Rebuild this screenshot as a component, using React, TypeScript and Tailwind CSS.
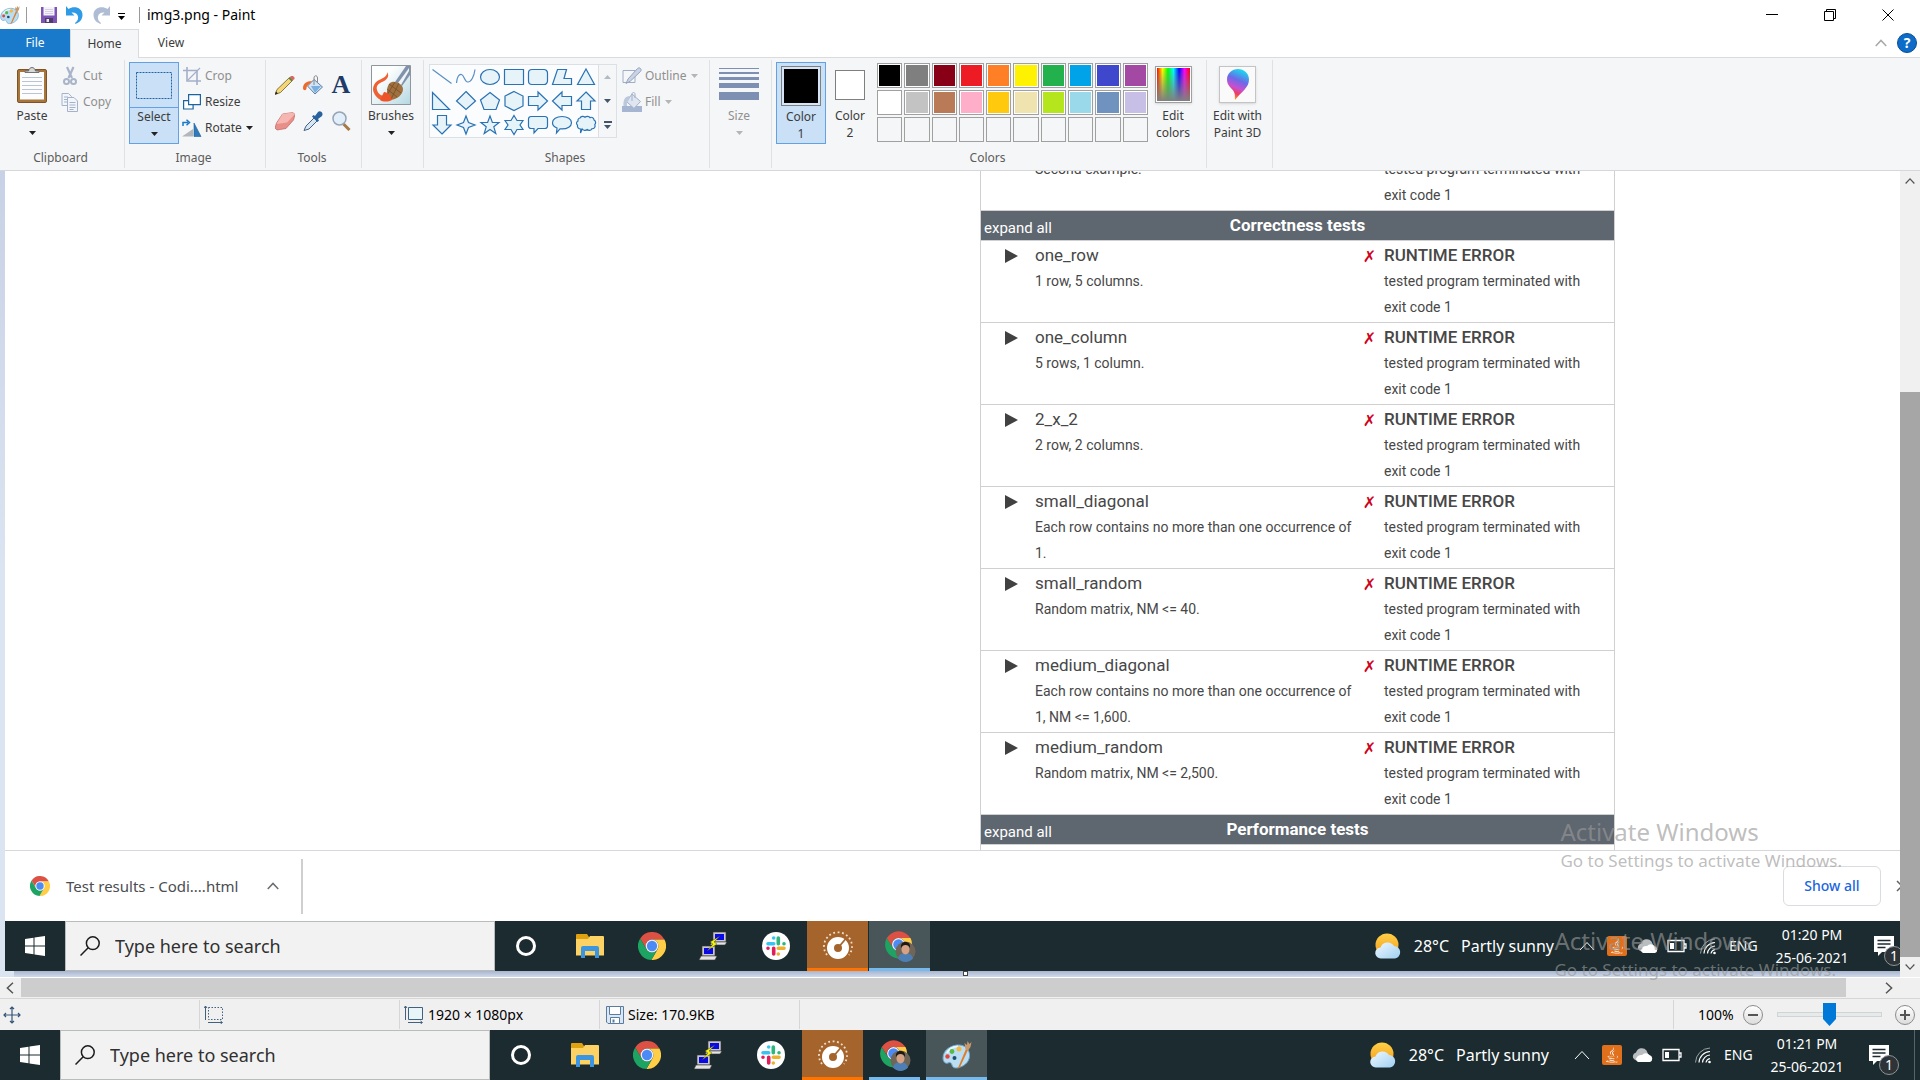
import type { ReactNode } from "react";
import { FaJava } from "react-icons/fa";

/* ---------- data ---------- */

type TestCase = { name: string; info: string };

const tests: TestCase[] = [
  { name: "one_row", info: "1 row, 5 columns." },
  { name: "one_column", info: "5 rows, 1 column." },
  { name: "2_x_2", info: "2 row, 2 columns." },
  { name: "small_diagonal", info: "Each row contains no more than one occurrence of 1." },
  { name: "small_random", info: "Random matrix, NM <= 40." },
  { name: "medium_diagonal", info: "Each row contains no more than one occurrence of 1, NM <= 1,600." },
  { name: "medium_random", info: "Random matrix, NM <= 2,500." },
];

const palette = [
  "#000000", "#7f7f7f", "#880015", "#ed1c24", "#ff7f27", "#fff200", "#22b14c", "#00a2e8", "#3f48cc", "#a349a4",
  "#ffffff", "#c3c3c3", "#b97a57", "#ffaec9", "#ffc90e", "#efe4b0", "#b5e61d", "#99d9ea", "#7092be", "#c8bfe7",
  "", "", "", "", "", "", "", "", "", "",
];

const shapes: { label: string; d: string; open?: boolean }[] = [
  { label: "Line", d: "M2.5 4.5 21.500 18.500", open: true },
  { label: "Curve", d: "M2.500 18C3 12 5 9 7.500 9.500c3 1 3 8 6.500 7.500 3 0 6-5 7-12.500", open: true },
  { label: "Oval", d: "M2.500 12a9.500 7.500 0 1 0 19 0a9.500 7.500 0 1 0-19 0Z" },
  { label: "Rectangle", d: "M2.500 4.500h19v15h-19Z" },
  { label: "Rounded rectangle", d: "M6 4.500h12a3.500 3.500 0 0 1 3.500 3.500v8a3.500 3.500 0 0 1-3.500 3.500H6A3.500 3.500 0 0 1 2.500 16V8A3.500 3.500 0 0 1 6 4.500Z" },
  { label: "Polygon", d: "M7.500 4.500h9L14 13.500h7.500v6h-19Z" },
  { label: "Triangle", d: "M12 4 20.500 19.500h-17Z" },
  { label: "Right triangle", d: "M2.500 3.500v17h17Z" },
  { label: "Diamond", d: "M12 2.500 21.500 12 12 20.500 2.500 12Z" },
  { label: "Pentagon", d: "M12 3.500 21.500 11 18 20.500H6L2.500 11Z" },
  { label: "Hexagon", d: "M12 2.500 21 7v10l-9 4.500L3 17V7Z" },
  { label: "Right arrow", d: "M2.500 7.500h9.500V3l9.500 9-9.500 9v-4.500H2.500Z" },
  { label: "Left arrow", d: "M21.500 7.500H12V3l-9.500 9 9.500 9v-4.500h9.500Z" },
  { label: "Up arrow", d: "M12 3l9 9h-4.500v8.500h-9V12H3Z" },
  { label: "Down arrow", d: "M12 21l9-9h-4.500V2.500h-9V12H3Z" },
  { label: "Four-point star", d: "M12 3l2.500 6.500 6.500 2.500-6.500 2.500L12 21l-2.500-6.500L3 12l6.500-2.500Z" },
  { label: "Five-point star", d: "M12 3l2.400 6.500h6.600l-5.200 4.300 2 6.700L12 16.500l-5.800 4 2-6.700L3 9.500h6.600Z" },
  { label: "Six-point star", d: "M12 2.500l3 5h6L18 12l3 4.500h-6l-3 5-3-5H3L6 12 3 7.500h6Z" },
  { label: "Rounded callout", d: "M5 3.500h14a2.500 2.500 0 0 1 2.500 2.500v7a2.500 2.500 0 0 1-2.500 2.500h-7L8 20v-4.500H5A2.500 2.500 0 0 1 2.500 13V6A2.500 2.500 0 0 1 5 3.500Z" },
  { label: "Oval callout", d: "M12 3.500c5.500 0 9.500 2.600 9.500 6.200s-4 6.200-9.500 6.200h-2L6.500 20l.5-5C4.300 14 2.500 12 2.500 9.700 2.500 6.100 6.500 3.500 12 3.500Z" },
  { label: "Cloud callout", d: "M6 5c1-2 3.500-2 5-.8C12.500 3 15 3 16 4.600c2-1 4 .4 4 2.400 2 1 2 3.500.8 4.700 1 1.800-.5 4.300-2.800 4-1 2-3.500 2-4.800.8-1.500 1.500-4 1-5-.5L6.500 20l.3-4C4.500 16 3 14 3.500 12.300 2 11 2.300 8.600 4 8 3.600 6.400 4.600 5.200 6 5Z" },
];

/* ---------- icons ---------- */

function Caret({ className = "text-[#222]" }: { className?: string }) {
  return (
    <svg viewBox="0 0 7 4" className={`h-1 w-[7px] ${className}`} aria-hidden="true">
      <path d="M0 0h7L3.500 4Z" fill="currentColor" />
    </svg>
  );
}

function Chevron({ className }: { className: string }) {
  return (
    <svg viewBox="0 0 16 10" className={className} fill="none" stroke="currentColor" aria-hidden="true">
      <path d="M1 9l7-7.500L15 9" />
    </svg>
  );
}

function PaintIcon({ className }: { className: string }) {
  return (
    <svg viewBox="0 0 30 30" className={className} aria-hidden="true">
      <path d="M15 5C7 6 1 11 1 18c0 4 2.500 6 5 5 2-1 3.500 0 4 2 .6 3 3.500 3.500 7 2.500 7-2 11-7 10.500-13C27 8 22 4.500 15 5Z" fill="#b9def3" stroke="#6ea5cb" />
      <path d="M5 13c2-4 6-6.500 11-6.500" stroke="#e8f6fd" strokeWidth="2" fill="none" />
      <circle cx="5.500" cy="16.500" r="2.200" fill="#e2453c" />
      <circle cx="10" cy="11.500" r="2.400" fill="#58b947" />
      <circle cx="17" cy="9" r="2.500" fill="#f6b73c" />
      <circle cx="12.500" cy="18" r="2" fill="#1f4d6b" />
      <path d="M15.500 29 24 9l2 1-8 17Z" fill="#e07b28" />
      <path d="M23.500 9.500 22.500 3 25 5l.5-4 2 3 2-2-1 5-2.500 3.500Z" fill="#c89a6c" />
    </svg>
  );
}

function ChromeIcon({ className }: { className: string }) {
  return (
    <svg viewBox="0 0 24 24" className={className} aria-hidden="true">
      <path d="M1.900 5.510A12 12 0 0 1 22.670 6.500L12 6.500A5.500 5.500 0 0 0 7.240 14.750Z" fill="#dd5144" />
      <path d="M22.670 6.500A12 12 0 0 1 11.430 23.990L16.760 14.750A5.500 5.500 0 0 0 12 6.500Z" fill="#ffcd46" />
      <path d="M11.430 23.990A12 12 0 0 1 1.900 5.510L7.240 14.750A5.500 5.500 0 0 0 16.760 14.750Z" fill="#1da462" />
      <circle cx="12" cy="12" r="5.500" fill="#f1f1f1" />
      <circle cx="12" cy="12" r="4.400" fill="#4c8bf5" />
    </svg>
  );
}

function ChromeProfileIcon() {
  return (
    <svg viewBox="0 0 32 32" className="h-8 w-8" aria-hidden="true">
      <path d="M2.700 8A14 14 0 0 1 26.500 8L14.500 8A6.500 6.500 0 0 0 8.800 18Z" fill="#dd5144" />
      <path d="M26.500 8A14 14 0 0 1 14 28.500L20 18A6.500 6.500 0 0 0 14.500 8Z" fill="#ffcd46" />
      <path d="M14 28.500A14 14 0 0 1 2.700 8L8.800 18A6.500 6.500 0 0 0 20 18Z" fill="#1da462" />
      <circle cx="14.500" cy="14.500" r="6.500" fill="#f1f1f1" />
      <circle cx="14.500" cy="14.500" r="5.200" fill="#4c8bf5" />
      <circle cx="21.500" cy="21.500" r="10" fill="#6f6659" />
      <path d="M14 28.500c1-4 4-5.500 7.500-5.500s6.500 1.500 7.500 5.500a10 10 0 0 1-15 0Z" fill="#4d7fb4" />
      <ellipse cx="21.500" cy="19.500" rx="4" ry="5" fill="#d6a283" />
      <path d="M17 18c-.5-4 1.500-6 4.500-6s5 2 4.500 6c-1-2-2-3-4.500-3s-3.500 1-4.500 3Z" fill="#1d1917" />
    </svg>
  );
}

function FolderIcon() {
  return (
    <svg viewBox="0 0 28 24" className="h-6 w-7" aria-hidden="true">
      <path d="M0 1a1 1 0 0 1 1-1h10l2 3v4H0Z" fill="#e0a10e" />
      <path d="M0 5h12l2-3h13a1 1 0 0 1 1 1v18.500H0Z" fill="#fdd264" />
      <path d="M5 24V14a2 2 0 0 1 2-2h14a2 2 0 0 1 2 2v10h-4v-7H9v7Z" fill="#3b95e0" />
    </svg>
  );
}

function PuttyIcon() {
  return (
    <svg viewBox="0 0 30 30" className="h-[30px] w-[30px]" aria-hidden="true">
      <path d="M14 1h13v10H14Z" fill="#c8c8c8" stroke="#333" strokeWidth=".6" />
      <path d="M16 3h9v6h-9Z" fill="#0808e8" />
      <path d="M13 11h15l-2 3H11Z" fill="#e4e4e4" stroke="#333" strokeWidth=".6" />
      <path d="M3 15h13v10H3Z" fill="#c8c8c8" stroke="#333" strokeWidth=".6" />
      <path d="M5 17h9v6H5Z" fill="#0808e8" />
      <path d="M2 25h16l-2 4H0Z" fill="#e4e4e4" stroke="#333" strokeWidth=".6" />
      <path d="M21 5l-10 6 3 2-6 7 10-7-3-2Z" fill="#f6f600" stroke="#333" strokeWidth=".4" />
    </svg>
  );
}

function SlackIcon() {
  return (
    <svg viewBox="0 0 28 28" className="h-7 w-7" aria-hidden="true">
      <circle cx="14" cy="14" r="14" fill="#fff" />
      <g strokeWidth="3.600" strokeLinecap="round">
        <path d="M11.700 6v0M6 11.700h5.700" stroke="#36c5f0" />
        <path d="M16.300 6v5.700M22 11.700v0" stroke="#2eb67d" />
        <path d="M16.300 22v0M16.300 16.300H22" stroke="#ecb22e" />
        <path d="M11.700 22v-5.700M6 16.300v0" stroke="#e01e5a" />
      </g>
    </svg>
  );
}

function GaugeIcon() {
  return (
    <svg viewBox="0 0 30 30" className="h-[30px] w-[30px]" fill="none" aria-hidden="true">
      <path d="M4 24A14 14 0 1 1 26 24" stroke="#f3dfcd" strokeWidth="1.800" strokeDasharray="1.800 2.600" />
      <circle cx="15" cy="17" r="7.500" stroke="#fff" strokeWidth="7" />
      <path d="M14.500 17.500l8-9.500" stroke="#a4642c" strokeWidth="1.800" />
    </svg>
  );
}

function WindowsLogo() {
  return (
    <svg viewBox="0 0 20 20" className="h-5 w-5" fill="#fff" aria-hidden="true">
      <path d="M0 3l8.500-1.200V9.500H0ZM9.500 1.600 20 0v9.500H9.500ZM0 10.500h8.500v7.700L0 17ZM9.500 10.500H20V20L9.500 18.400Z" />
    </svg>
  );
}

function SearchIcon() {
  return (
    <svg viewBox="0 0 20 20" className="h-5 w-5 shrink-0" fill="none" stroke="#1c1c1c" strokeWidth="1.500" aria-hidden="true">
      <circle cx="12.800" cy="7.200" r="6.400" />
      <path d="M8.200 11.800.5 19.500" />
    </svg>
  );
}

function WeatherIcon() {
  return (
    <svg viewBox="0 0 26 26" className="h-[26px] w-[26px]" aria-hidden="true">
      <defs>
        <linearGradient id="sun" x1="0" y1="0" x2="0" y2="1">
          <stop offset="0" stopColor="#ffd046" />
          <stop offset="1" stopColor="#f59a1b" />
        </linearGradient>
        <linearGradient id="cloud" x1="0" y1="0" x2="1" y2="1">
          <stop offset="0" stopColor="#f0f9ff" />
          <stop offset="1" stopColor="#9fcff2" />
        </linearGradient>
      </defs>
      <circle cx="12" cy="12" r="11.500" fill="url(#sun)" />
      <path d="M6 25.500a5.500 5.500 0 0 1-.5-11A7.500 7.500 0 0 1 19 13a6.300 6.300 0 0 1 1 12.500Z" fill="url(#cloud)" />
    </svg>
  );
}

function CloudIcon() {
  return (
    <svg viewBox="0 0 22 16" className="h-4 w-[22px]" aria-hidden="true">
      <path d="M3 13a4 4 0 0 1 1-7.500 6 6 0 0 1 10.500-2L17 9 8 14Z" fill="#b9bdbf" />
      <path d="M6 15a3 3 0 0 1-1-5 5 5 0 0 1 5-2 5 5 0 0 1 7.500 0A3.700 3.700 0 0 1 18 15Z" fill="#fff" />
    </svg>
  );
}

function BatteryIcon() {
  return (
    <svg viewBox="0 0 20 14" className="h-3.5 w-5" aria-hidden="true">
      <path d="M1 1.500h16v11H1ZM17 5h2v4h-2" fill="none" stroke="#fff" strokeWidth="1.300" />
      <path d="M3 4h4v6H3Z" fill="#fff" />
    </svg>
  );
}

function WifiIcon() {
  return (
    <svg viewBox="0 0 18 18" className="h-[18px] w-[18px]" fill="none" stroke="#fff" aria-hidden="true">
      <path d="M1.500 16.500A15 15 0 0 1 16 2" stroke="#9aa4a6" />
      <path d="M5 16.500A11.500 11.500 0 0 1 16 5.500M8.500 16.500A8 8 0 0 1 16 9M12 16.500a5 5 0 0 1 4-4" strokeWidth="1.200" />
      <circle cx="15.500" cy="16" r="1.300" fill="#fff" stroke="none" />
    </svg>
  );
}

function NotificationIcon() {
  return (
    <span className="relative block h-5 w-5">
      <svg viewBox="0 0 20 20" className="h-5 w-5" aria-hidden="true">
        <path d="M0 0h20v16H8l-4 4v-4H0Z" fill="#fff" />
        <path d="M3.500 4.500h13M3.500 8h13M3.500 11.500h8" stroke="#1b2b2f" strokeWidth="1.300" />
      </svg>
      <span className="absolute top-2.5 left-2.5 flex h-5 w-5 items-center justify-center rounded-full border border-[#8d9496] bg-[#2d3336] text-sm leading-none text-white">
        1
      </span>
    </span>
  );
}

function SaveIcon() {
  return (
    <svg viewBox="0 0 16 16" className="h-4 w-4" aria-hidden="true">
      <path d="M0 0h16v16H0Z" fill="#7d53b5" />
      <path d="M2.500 0h11v8.500h-11Z" fill="#f4f2fa" />
      <path d="M4 2.500h8M4 4.500h8M4 6.500h8" stroke="#c8c0dc" strokeWidth=".7" />
      <path d="M4 11h8v5H4Z" fill="#4c3c68" />
      <path d="M5.500 12h2.500v3H5.500Z" fill="#e9e4f4" />
    </svg>
  );
}

function UndoIcon({ className }: { className: string }) {
  return (
    <svg viewBox="0 0 17 18" className={className} aria-hidden="true">
      <path d="M0 0 2.500 3C8-.5 16.500 1.500 16.500 9c0 4.500-3 7.500-7 9l-.5-1c2.500-2 3.500-4 3-6.500C11.500 7 8 6 5.500 6.500L8.500 9.500H0Z" fill="currentColor" />
    </svg>
  );
}

function PasteIcon() {
  return (
    <svg viewBox="0 0 30 36" className="h-9 w-[30px]" aria-hidden="true">
      <rect x=".5" y="2.500" width="29" height="33" rx="1.500" fill="#a9763a" stroke="#7d5427" />
      <path d="M3 5h24v27.500H3Z" fill="#fdfdfd" />
      <path d="M5 10.500h20M5 14.500h20M5 18.500h20M5 22.500h20M5 26.500h20" stroke="#b9c5d6" />
      <path d="M8 5.500h14V4h-3.500C18 1.500 16.500.5 15 .5S12 1.500 11.500 4H8Z" fill="#d8d8d8" stroke="#666" strokeWidth=".9" />
    </svg>
  );
}

function CutIcon() {
  return (
    <svg viewBox="0 0 18 20" className="h-5 w-[18px]" fill="none" stroke="#a9b4ca" aria-hidden="true">
      <path d="M6 1l5 11M12.500 1l-5 11" strokeWidth="2.200" />
      <circle cx="5.500" cy="15.500" r="2.500" strokeWidth="2" />
      <circle cx="12.500" cy="15.500" r="2.500" strokeWidth="2" />
    </svg>
  );
}

function CopyIcon() {
  return (
    <svg viewBox="0 0 18 20" className="h-5 w-[18px]" fill="#f2f5fa" stroke="#a5b2ca" aria-hidden="true">
      <path d="M1 1.500h6.500l3 3v9H1Z" />
      <path d="M3 5h4M3 7.500h4M3 10h4" />
      <path d="M6.500 5.500H13l3.500 3.500v10.500h-10Z" />
      <path d="M8.500 10.500h6M8.500 13h6M8.500 15.500h6M8.500 17.500h4" />
    </svg>
  );
}

function CropIcon() {
  return (
    <svg viewBox="0 0 18 18" className="h-[18px] w-[18px]" fill="none" stroke="#a2afc9" strokeWidth="1.600" aria-hidden="true">
      <path d="M4 0v14h14M0 3.500h14V18" />
      <path d="M5 13 17 1" strokeWidth="1.100" />
    </svg>
  );
}

function ResizeIcon() {
  return (
    <svg viewBox="0 0 18 18" className="h-[18px] w-[18px]" fill="#fdfeff" stroke="#1c63a0" strokeWidth="1.200" aria-hidden="true">
      <path d="M.6 7.600h9.500v8.400H.6Z" />
      <path d="M5.600 1.600h11.800v10H5.600Z" />
    </svg>
  );
}

function RotateIcon() {
  return (
    <svg viewBox="0 0 20 18" className="h-[18px] w-5 shrink-0" aria-hidden="true">
      <path d="M0 17.500 11 10v7.500Z" fill="#b3b7bb" />
      <path d="M12 17.500V4l7 13.500Z" fill="#2f7ab8" stroke="#1c5f9a" strokeWidth=".6" />
      <path d="M1 7V3.500h5M4.500.8 7.500 3.500l-3 2.700" fill="none" stroke="#1979ca" strokeWidth="1.500" />
    </svg>
  );
}

const toolIcons: { label: string; icon: ReactNode }[] = [
  {
    label: "Pencil",
    icon: (
      <svg viewBox="0 0 20 20" className="h-5 w-5" aria-hidden="true">
        <path d="M0 19.500 2 14.500 14.500 2.500l3 3L5.500 17.500Z" fill="#f5d675" stroke="#6d5a28" strokeWidth=".8" />
        <path d="M14.500 2.500 16 1h2l1.500 1.500v1.500L17.500 5.500Z" fill="#d46b63" />
        <path d="M13.500 3.500l1-1 3 3-1 1Z" fill="#4e8a4e" />
        <path d="M0 19.500l1-3 2 2Z" fill="#222" />
      </svg>
    ),
  },
  {
    label: "Fill with color",
    icon: (
      <svg viewBox="0 0 20 20" className="h-5 w-5" aria-hidden="true">
        <path d="M11 4.500 19.500 12 12 19 4.500 11Z" fill="#cfe4f5" stroke="#5d7fa5" />
        <path d="M8 11h10l-6 7Z" fill="#79aede" />
        <path d="M11 10V3c0-3 3.500-3 3.500 0v5" fill="none" stroke="#888" />
        <path d="M9 6C3 6 0 9 0 13c0 3 3.500 3 3.500 0 0-2 1-3 3-4Z" fill="#ee6a2c" />
      </svg>
    ),
  },
  {
    label: "Text",
    icon: <span className="font-['Liberation_Serif',serif] text-[26px] leading-5 font-bold text-[#1f3c68]" aria-hidden="true">A</span>,
  },
  {
    label: "Eraser",
    icon: (
      <svg viewBox="0 0 20 20" className="h-5 w-5" aria-hidden="true">
        <path d="M7.500 3 18 1.500 20 3.500 18.500 9 11 17.500 2 19 0 17 1.500 12Z" fill="#e98f8a" stroke="#c0625e" strokeWidth=".7" />
        <path d="M7.500 3 18 1.500 19.500 3.500 12 11.500 1.500 13Z" fill="#f6b7b2" />
      </svg>
    ),
  },
  {
    label: "Color picker",
    icon: (
      <svg viewBox="0 0 20 20" className="h-5 w-5" aria-hidden="true">
        <path d="M1 19.500 3 15l8-8 3 3-8 8Z" fill="#d7e6f3" stroke="#47627f" />
        <path d="M9 5.500l1.500-1.500 1.500 1 3-4c2-2 6 1 4 4l-4 3 1 1.500-1.500 1.500Z" fill="#28639f" />
      </svg>
    ),
  },
  {
    label: "Magnifier",
    icon: (
      <svg viewBox="0 0 20 20" className="h-5 w-5" aria-hidden="true">
        <path d="M12.500 13l6 6" stroke="#a57a44" strokeWidth="3" />
        <circle cx="8.500" cy="7.500" r="6.500" fill="#e1effb" stroke="#98a4b5" strokeWidth="1.500" />
      </svg>
    ),
  },
];

function BrushIcon() {
  return (
    <svg viewBox="0 0 40 40" className="h-10 w-10" aria-hidden="true">
      <defs>
        <linearGradient id="brush-bg" x1="0" y1="0" x2="1" y2="1">
          <stop offset=".3" stopColor="#fdfefe" />
          <stop offset="1" stopColor="#b4d8e2" />
        </linearGradient>
      </defs>
      <path d="M.5.5h39v39H.5Z" fill="url(#brush-bg)" stroke="#8f979d" />
      <path d="M16 7C17 10 13 13 8 15c-6 3-7 9-5 13 2 5 7 8 13 8l2-5C11 32 7 29 6 25c-1-4 1-6 5-8 5-2 8-6 5-10Z" fill="#ef6033" />
      <path d="M24 17 35 1h4v9L31 21Z" fill="#8092aa" />
      <path d="M27 18 38 3v3L30 20Z" fill="#eef3f8" />
      <path d="M21 17c4-1 11 3 11 7 0 6-6 10-12 11-3-1-4-5-4-8 0-4 1-9 5-10Z" fill="#a0703f" />
      <path d="M18 19l12 9M16 24l10 8M28 18l-8 16M24 17l-8 13" stroke="#70491f" strokeWidth=".7" />
      <path d="M13 27c4 0 7 4 8 8-4 2-9 2-12 0 1-2 3-6 4-8Z" fill="#ee5427" />
    </svg>
  );
}

function OutlineIcon() {
  return (
    <svg viewBox="0 0 20 18" className="h-[18px] w-5 shrink-0" fill="none" aria-hidden="true">
      <path d="M1 3.500h12v12H1Z" stroke="#9fadc6" />
      <path d="M4 16.500 6 12l9.500-10.500C17.500-.5 20.500 2.500 18.500 4.500L8.500 14Z" fill="#cad3e4" stroke="#96a5c2" />
    </svg>
  );
}

function FillIcon() {
  return (
    <svg viewBox="0 0 20 20" className="h-5 w-5 shrink-0" aria-hidden="true">
      <path d="M0 14h20v6H0Z" fill="#a6b5d2" />
      <path d="M10 2 18.500 9.500 12 16.500 4.500 9.500Z" fill="#dfe6f1" stroke="#a3b0c8" />
      <path d="M8 4C3 4 1 8 1.500 14H5c0-3 0-4 2-6Z" fill="#bcc8dd" />
      <path d="M10 9V2c0-2 3-2 3 0v4" fill="none" stroke="#a3b0c8" />
    </svg>
  );
}

function Paint3DIcon() {
  return (
    <svg viewBox="0 0 22 32" className="h-8 w-[22px]" aria-hidden="true">
      <defs>
        <linearGradient id="drop" x1=".6" y1="0" x2=".3" y2="1">
          <stop offset="0" stopColor="#18dcf0" />
          <stop offset=".35" stopColor="#6a6ae8" />
          <stop offset=".6" stopColor="#c84fd0" />
          <stop offset=".78" stopColor="#ee3d5e" />
          <stop offset="1" stopColor="#ffb31a" />
        </linearGradient>
      </defs>
      <path d="M11 0C17 0 22 4.500 22 10.500 22 19 14 23 8 31c-.5-3 .5-5-1-8C5 19 0 17 0 10.500 0 4.500 5 0 11 0Z" fill="url(#drop)" />
    </svg>
  );
}

function DimensionsIcon({ dotted }: { dotted?: boolean }) {
  return (
    <svg viewBox="0 0 20 18" className="h-[18px] w-5 shrink-0" fill="none" stroke="#41617f" aria-hidden="true">
      <path d="M1.500 0v14M4 16.500h14M0 2l1.500-2L3 2M16.500 15l2 1.500-2 1.500" />
      {dotted ? (
        <path d="M4.500 1.500h14v12h-14Z" strokeDasharray="1.500 1.500" />
      ) : (
        <path d="M4.500 1.500h14v12h-14Z" fill="#e7f5f8" />
      )}
    </svg>
  );
}

/* ---------- title bar and tabs ---------- */

function TitleBar() {
  return (
    <header className="flex h-[29px] items-center bg-white">
      <PaintIcon className="h-5 w-5" />
      <span className="ml-1.5 h-4 w-px bg-[#9a9a9a]" />
      <button aria-label="Save" className="ml-3.5"><SaveIcon /></button>
      <button aria-label="Undo" className="ml-[9px]"><UndoIcon className="h-[18px] w-[17px] text-[#2f9ae6]" /></button>
      <button aria-label="Redo" className="ml-2.5 -scale-x-100"><UndoIcon className="h-[18px] w-[17px] text-[#afbdd4]" /></button>
      <button aria-label="Customize Quick Access Toolbar" className="ml-2 flex flex-col items-center gap-0.5 pt-1">
        <span className="h-px w-[7px] bg-black" />
        <Caret className="text-black" />
      </button>
      <span className="ml-[14px] h-4 w-px bg-[#9a9a9a]" />
      <h1 className="ml-[7px] text-sm text-black">img3.png - Paint</h1>
      <div className="ml-auto flex h-full pr-[3px]">
        <button aria-label="Minimize" className="flex w-[58px] items-center justify-center">
          <span className="h-px w-3 bg-black" />
        </button>
        <button aria-label="Restore" className="flex w-[58px] items-center justify-center">
          <svg viewBox="0 0 12 12" className="h-3 w-3" fill="none" stroke="#000" aria-hidden="true">
            <path d="M.5 2.500h9v9h-9ZM2.500 2.500v-2h9v9h-2" />
          </svg>
        </button>
        <button aria-label="Close" className="flex w-[58px] items-center justify-center">
          <svg viewBox="0 0 12 12" className="h-3 w-3" stroke="#000" aria-hidden="true">
            <path d="M.5.5l11 11M11.500.5l-11 11" />
          </svg>
        </button>
      </div>
    </header>
  );
}

function TabBar() {
  return (
    <nav className="flex h-[29px] border-b border-[#dadbdc] bg-white text-xs text-[#3c3c3c]">
      <button className="w-[70px] bg-[#1979ca] text-white">File</button>
      <button className="-mb-px w-[69px] border border-b-0 border-[#dadbdc] bg-[#f5f6f7]">Home</button>
      <button className="w-16">View</button>
      <div className="ml-auto flex items-center gap-2.5 pr-[3px]">
        <button aria-label="Minimize the Ribbon"><Chevron className="h-2 w-3 stroke-2 text-[#a8a8a8]" /></button>
        <button aria-label="Help" className="h-5 w-5 rounded-full border border-[#0a4f96] bg-[#0c6cc8] text-sm leading-none font-bold text-white">?</button>
      </div>
    </nav>
  );
}

/* ---------- ribbon ---------- */

function Group({ label, width, children }: { label?: string; width: string; children: ReactNode }) {
  return (
    <section aria-label={label} className={`flex shrink-0 flex-col border-r border-[#e0e1e3] ${width}`}>
      <div className="flex h-[90px] items-start">{children}</div>
      <div className="pr-[3px] text-center leading-5 text-[#5c5c5c]">{label}</div>
    </section>
  );
}

function BigButton({ icon, label, second, className = "" }: { icon: ReactNode; label: string; second?: ReactNode; className?: string }) {
  return (
    <button className={`mt-0.5 flex h-[82px] flex-col items-center ${className}`}>
      <span className="flex h-[45px] items-center justify-center">{icon}</span>
      <span className="leading-[17px]">{label}</span>
      <span className="flex h-[17px] items-center justify-center leading-[17px]">{second ?? <Caret />}</span>
    </button>
  );
}

function SmallButton({ icon, label, disabled, caret }: { icon: ReactNode; label: string; disabled?: boolean; caret?: boolean }) {
  return (
    <button disabled={disabled} className={`flex h-[26px] items-center gap-1 ${disabled ? "text-[#8f8f8f]" : ""}`}>
      <span className="flex w-[18px] justify-center">{icon}</span>
      <span>{label}</span>
      {caret && <Caret className={disabled ? "text-[#b5b5b5]" : "text-[#222]"} />}
    </button>
  );
}

function Ribbon() {
  return (
    <div className="flex h-[113px] overflow-hidden border-b border-[#d5d7da] bg-[#f5f6f7] pt-0.5 pb-0.5 text-xs text-[#3c3c3c]">
      <Group label="Clipboard" width="w-[125px]">
        <BigButton icon={<PasteIcon />} label="Paste" className="ml-[7px] w-[50px]" />
        <div className="mt-[3px] ml-1">
          <SmallButton icon={<CutIcon />} label="Cut" disabled />
          <SmallButton icon={<CopyIcon />} label="Copy" disabled />
        </div>
      </Group>

      <Group label="Image" width="w-[141px]">
        <button className="mt-0.5 ml-1 flex h-[82px] w-[50px] flex-col items-center border border-[#62a2e4] bg-[#c9e0f7]">
          <span className="flex h-[45px] w-full items-center justify-center border-b border-[#62a2e4]">
            <svg viewBox="0 0 36 27" className="h-[27px] w-9" aria-hidden="true">
              <path d="M.5.5h35v26H.5Z" fill="none" stroke="#1c63a8" strokeDasharray="2 1" />
            </svg>
          </span>
          <span className="leading-[17px]">Select</span>
          <span className="flex h-[17px] items-center"><Caret /></span>
        </button>
        <div className="mt-[3px] ml-1">
          <SmallButton icon={<CropIcon />} label="Crop" disabled />
          <SmallButton icon={<ResizeIcon />} label="Resize" />
          <SmallButton icon={<RotateIcon />} label="Rotate" caret />
        </div>
      </Group>

      <Group label="Tools" width="w-24">
        <div className="mt-[7px] ml-[5px] grid grid-cols-3">
          {toolIcons.map((t) => (
            <button key={t.label} aria-label={t.label} className="flex h-9 w-7 items-center justify-center">{t.icon}</button>
          ))}
        </div>
      </Group>

      <Group width="w-[62px]">
        <BigButton icon={<BrushIcon />} label="Brushes" className="w-[58px]" />
      </Group>

      <Group label="Shapes" width="w-[286px]">
        <div className="mt-1 ml-[5px] flex border border-[#dcdfe3] bg-[#fbfcfe]">
          <div className="grid grid-cols-7">
            {shapes.map((s) => (
              <button key={s.label} aria-label={s.label} className="h-6 w-6">
                <svg viewBox="0 0 24 24" className="h-6 w-6" fill={s.open ? "none" : "#e6f4f9"} stroke={s.open ? "#5b8fc4" : "#2a72b3"} strokeWidth="1.200" aria-hidden="true">
                  <path d={s.d} />
                </svg>
              </button>
            ))}
          </div>
          <div className="flex w-[18px] flex-col border-l border-[#dcdfe3] bg-[#f5f6f7]">
            <button aria-label="Scroll shapes up" className="flex flex-1 items-center justify-center"><Caret className="rotate-180 text-[#b3bac4]" /></button>
            <button aria-label="Scroll shapes down" className="flex flex-1 items-center justify-center"><Caret className="text-[#44546a]" /></button>
            <button aria-label="More shapes" className="flex flex-1 flex-col items-center justify-center gap-0.5">
              <span className="h-0.5 w-2 bg-[#44546a]" />
              <Caret className="text-[#44546a]" />
            </button>
          </div>
        </div>
        <div className="mt-[3px] ml-1.5">
          <SmallButton icon={<OutlineIcon />} label="Outline" disabled caret />
          <SmallButton icon={<FillIcon />} label="Fill" disabled caret />
        </div>
      </Group>

      <Group width="w-[62px]">
        <BigButton
          className="w-[58px] text-[#8f8f8f]"
          icon={
            <svg viewBox="0 0 40 33" className="h-[33px] w-10" fill="#7d8fb3" aria-hidden="true">
              <path d="M0 0h40v1H0ZM0 4h40v2H0ZM0 9h40v3H0ZM0 15h40v5H0ZM0 24h40v8H0Z" />
            </svg>
          }
          label="Size"
          second={<Caret className="text-[#b5b5b5]" />}
        />
      </Group>

      <Group label="Colors" width="w-[435px]">
        <BigButton
          className="ml-1 w-[50px] border border-[#62a2e4] bg-[#c9e0f7]"
          icon={<span className="h-10 w-10 border border-[#7f7f7f] bg-[#d5e5f5] p-0.5"><span className="block h-full bg-black" /></span>}
          label="Color"
          second="1"
        />
        <BigButton
          className="w-12"
          icon={<span className="h-[30px] w-[30px] border border-[#7f7f7f] bg-white" />}
          label="Color"
          second="2"
        />
        <div className="mt-[3px] ml-[3px] grid w-[271px] grid-cols-10 gap-0.5">
          {palette.map((color, i) => (
            <button
              key={i}
              aria-label={color ? `Color ${color}` : "Empty custom color"}
              className={`h-[25px] border border-[#a0a0a0] p-px ${color ? "bg-white" : "bg-[#f5f6f7]"}`}
            >
              {color && <span className="block h-full" style={{ backgroundColor: color }} />}
            </button>
          ))}
        </div>
        <BigButton
          className="w-[50px]"
          icon={
            <span className="h-[37px] w-[37px] border border-[#a0a0a0] bg-white p-px shadow-sm">
              <span className="block h-full bg-[linear-gradient(to_top,#808080,transparent),linear-gradient(to_right,#f00,#ff0_17%,#0f0_33%,#0ff_50%,#00f_67%,#f0f_83%,#f00)]" />
            </span>
          }
          label="Edit"
          second="colors"
        />
      </Group>

      <Group width="w-[66px]">
        <BigButton
          className="w-[61px]"
          icon={<span className="flex h-[37px] w-[37px] items-center justify-center border border-[#c4c4c4] bg-[#fafafa] shadow-sm"><Paint3DIcon /></span>}
          label="Edit with"
          second="Paint 3D"
        />
      </Group>
    </div>
  );
}

/* ---------- report table ---------- */

function ResultRow({ name, info }: { name?: string; info: string }) {
  return (
    <tr className="align-top text-sm leading-[26px] [&>td]:border-b [&>td]:border-[#d0d0d0] [&>td]:pt-0.5 [&>td]:pb-0.5">
      <td className="pl-6">
        {name && (
          <button aria-label={`Expand ${name}`} className="flex h-[26px] items-center">
            <svg viewBox="0 0 13 14" className="h-3.5 w-[13px]" aria-hidden="true"><path d="M0 0 13 7 0 14Z" fill="#414141" /></svg>
          </button>
        )}
      </td>
      <td>
        <div className="h-[25px] text-[17px] leading-[25px]">{name}</div>
        {info}
      </td>
      <td className="text-center">
        {name && <span className="font-['DejaVu_Sans',sans-serif] text-base leading-7 text-[#d0021b]">✗</span>}
      </td>
      <td className="pr-4">
        <div className="h-[25px] text-[17px] leading-[25px] font-medium">{name && "RUNTIME ERROR"}</div>
        tested program terminated with exit code 1
      </td>
    </tr>
  );
}

function SectionHeader({ title }: { title: string }) {
  return (
    <tr>
      <th colSpan={4} className="border-b border-[#d0d0d0] bg-[#5e666f] p-0 font-normal text-white">
        <div className="grid h-[29px] grid-cols-[1fr_auto_1fr]">
          <a href="#expand" className="pt-1 pl-[3px] text-left text-[15px] leading-[26px]">expand all</a>
          <span className="text-[17px] leading-[29px] font-bold">{title}</span>
        </div>
      </th>
    </tr>
  );
}

function ReportPage() {
  return (
    <div className="flex min-h-0 flex-1 flex-col justify-end overflow-hidden">
      <div className="mr-[285px] ml-auto w-[635px] shrink-0 border-x border-[#d0d0d0] pb-[5px] font-[Roboto,sans-serif] text-[#474747]">
        <table className="w-full table-fixed border-separate border-spacing-0">
          <colgroup>
            <col className="w-[54px]" />
            <col className="w-80" />
            <col className="w-[29px]" />
            <col />
          </colgroup>
          <tbody>
            <ResultRow info="Second example." />
            <SectionHeader title="Correctness tests" />
            {tests.map((t) => <ResultRow key={t.name} {...t} />)}
            <SectionHeader title="Performance tests" />
          </tbody>
        </table>
      </div>
    </div>
  );
}

function DownloadShelf() {
  return (
    <div className="flex h-[71px] shrink-0 items-center overflow-hidden border-t border-[#d6d8db] bg-white">
      <ChromeIcon className="ml-[25px] h-5 w-5 shrink-0" />
      <span className="ml-4 text-[15px] text-[#4a4d51]">Test results - Codi....html</span>
      <button aria-label="Download options" className="ml-[29px]"><Chevron className="h-2 w-3 stroke-2 text-[#6b6f73]" /></button>
      <span className="ml-[22px] h-[55px] w-0.5 bg-[#cfcfcf]" />
      <button className="ml-auto h-10 w-[98px] shrink-0 rounded-md border border-[#dadce0] text-sm font-medium text-[#1a66e0]">Show all</button>
      <button aria-label="Close downloads" className="ml-[15px] w-1 shrink-0 overflow-hidden">
        <svg viewBox="0 0 12 12" className="h-3 w-3" stroke="#5f6368" strokeWidth="1.500" aria-hidden="true"><path d="M1 1l10 10M11 1 1 11" /></svg>
      </button>
    </div>
  );
}

/* ---------- taskbar ---------- */

function TaskButton({ label, tone = "", line = "", children }: { label: string; tone?: string; line?: string; children: ReactNode }) {
  return (
    <button aria-label={label} className="flex w-[62px] shrink-0 pr-px">
      <span className={`flex w-full flex-col ${tone}`}>
        <span className="flex flex-1 items-center justify-center pt-[3px]">{children}</span>
        <span className={`h-[3px] ${line}`} />
      </span>
    </button>
  );
}

function Taskbar({ time, nested }: { time: string; nested?: boolean }) {
  const searchId = nested ? "search-inner" : "search-outer";
  return (
    <div className="flex h-[50px] shrink-0 overflow-hidden bg-[#1b2b2f] text-white">
      <button aria-label="Start" className="flex w-[60px] shrink-0 items-center justify-center"><WindowsLogo /></button>
      <label htmlFor={searchId} className="flex w-[430px] shrink-0 items-center gap-[15px] border border-[#b9bcbd] bg-[#f2f2f2] pl-3.5">
        <SearchIcon />
        <input id={searchId} type="text" placeholder="Type here to search" className="min-w-0 flex-1 bg-transparent text-lg text-black outline-none placeholder:text-[#303030]" />
      </label>
      <button aria-label="Cortana" className="mr-[3px] flex w-[61px] shrink-0 items-center justify-center">
        <span className="h-5 w-5 rounded-full border-[3px] border-white" />
      </button>
      <TaskButton label="File Explorer"><FolderIcon /></TaskButton>
      <TaskButton label="Google Chrome"><ChromeIcon className="h-7 w-7" /></TaskButton>
      <TaskButton label="PuTTY"><PuttyIcon /></TaskButton>
      <TaskButton label="Slack"><SlackIcon /></TaskButton>
      <TaskButton label="Monitor" tone="bg-[#a4642c]" line="bg-[#ff7300]"><GaugeIcon /></TaskButton>
      {nested ? (
        <TaskButton label="Chrome window" tone="bg-[#485559]" line="bg-[#76b9ed]"><ChromeProfileIcon /></TaskButton>
      ) : (
        <>
          <TaskButton label="Chrome window" line="mx-[5px] bg-[#76b9ed]"><ChromeProfileIcon /></TaskButton>
          <TaskButton label="Paint" tone="bg-[#485559]" line="bg-[#76b9ed]"><PaintIcon className="h-[30px] w-[30px]" /></TaskButton>
        </>
      )}
      <div className={`ml-auto flex shrink-0 items-center ${nested ? "-mr-[25px]" : ""}`}>
        <WeatherIcon />
        <span className="ml-[13px] text-base">28°C</span>
        <span className="ml-3 w-[101px] text-base whitespace-nowrap">Partly sunny</span>
        <button aria-label="Show hidden icons" className="ml-[17px]"><Chevron className="h-2.5 w-4 text-white" /></button>
        <span className="ml-3 flex h-5 w-5 items-center justify-center rounded-xs bg-[#e0701c]"><FaJava className="h-4 w-4" /></span>
        <span className="ml-2.5"><CloudIcon /></span>
        <span className="ml-2"><BatteryIcon /></span>
        <span className="ml-3"><WifiIcon /></span>
        <span className="ml-3 w-[30px] text-sm">ENG</span>
        <span className="ml-3 w-[82px] text-center text-sm leading-[23px]">
          {time}
          <br />
          25-06-2021
        </span>
        <button aria-label="Notifications" className="mr-[25px] ml-[21px]"><NotificationIcon /></button>
        <span className="mr-[5px] h-[50px] w-px bg-[#57636a]" />
      </div>
    </div>
  );
}

/* ---------- scroll bars, status bar, overlays ---------- */

function Watermark({ className }: { className: string }) {
  return (
    <div className={`pointer-events-none absolute whitespace-nowrap text-[#999999]/65 ${className}`}>
      <p className="text-2xl leading-8">Activate Windows</p>
      <p className="text-[17px] leading-[26px]">Go to Settings to activate Windows.</p>
    </div>
  );
}

function VerticalScrollBar() {
  return (
    <div className="flex w-5 shrink-0 flex-col bg-[#f0f0f0]">
      <button aria-label="Scroll up" className="flex h-5 items-center justify-center"><Chevron className="h-2 w-2.5 stroke-2 text-[#555]" /></button>
      <div className="flex-[201]" />
      <div className="flex-[565] bg-[#a6a6a6]" />
      <button aria-label="Scroll down" className="flex h-5 items-center justify-center"><Chevron className="h-2 w-2.5 rotate-180 stroke-2 text-[#555]" /></button>
    </div>
  );
}

function HorizontalScrollBar() {
  return (
    <div className="flex h-[21px] border-t border-white bg-[#f0f0f0] pr-[21px] pb-px">
      <button aria-label="Scroll left" className="flex w-[21px] items-center justify-center pr-0.5"><Chevron className="h-2 w-3 -rotate-90 stroke-2 text-[#555]" /></button>
      <div className="flex-[1826] bg-[#cdcdcd]" />
      <div className="flex-[32]" />
      <button aria-label="Scroll right" className="flex w-[21px] items-center justify-center"><Chevron className="h-2 w-3 rotate-90 stroke-2 text-[#555]" /></button>
    </div>
  );
}

function StatusBar() {
  return (
    <footer className="flex h-8 border-t border-[#d6d6d6] bg-[#f0f0f0] text-sm text-black">
      <div className="my-px flex w-[200px] items-center border-r border-[#d6d6d6] pl-[3px]">
        <svg viewBox="0 0 18 18" className="h-[18px] w-[18px]" fill="none" stroke="#34567a" strokeWidth="1.200" aria-hidden="true">
          <path d="M9 1v16M1 9h16M7 3l2-2 2 2M7 15l2 2 2-2M3 7 1 9l2 2M15 7l2 2-2 2" />
        </svg>
      </div>
      <div className="my-px flex w-[200px] items-center border-r border-[#d6d6d6] pl-1"><DimensionsIcon dotted /></div>
      <div className="my-px flex w-[200px] items-center gap-1 border-r border-[#d6d6d6] pl-1"><DimensionsIcon />1920 × 1080px</div>
      <div className="my-px flex w-[200px] items-center gap-1 border-r border-[#d6d6d6] pl-1.5">
        <svg viewBox="0 0 18 18" className="h-[18px] w-[18px]" fill="#fdfdfd" stroke="#5b7c9f" aria-hidden="true">
          <path d="M.5.5h17v17H2L.5 16Z" fill="#dbe8f3" />
          <path d="M3.500.5h11v8h-11ZM4.500 11.500h9v6h-9Z" />
          <path d="M6.500 13.500h2v3h-2Z" fill="#5b7c9f" stroke="none" />
        </svg>
        Size: 170.9KB
      </div>
      <div className="my-px ml-auto flex items-center border-l border-[#d6d6d6] pr-[5px] pl-6">
        <span className="w-9 whitespace-nowrap">100%</span>
        <button aria-label="Zoom out" className="ml-[9px] flex h-5 w-5 items-center justify-center rounded-full border border-[#8c8c8c] bg-linear-to-b from-white to-[#dcdcdc]">
          <span className="h-0.5 w-2.5 bg-[#555]" />
        </button>
        <input
          type="range"
          aria-label="Zoom"
          min={0}
          max={100}
          defaultValue={50}
          className="mr-[13px] ml-3.5 h-[26px] w-[105px] appearance-none bg-transparent [&::-webkit-slider-runnable-track]:h-[5px] [&::-webkit-slider-runnable-track]:border [&::-webkit-slider-runnable-track]:border-[#d0d4d4] [&::-webkit-slider-runnable-track]:bg-[#e7eaea] [&::-webkit-slider-thumb]:-mt-[10px] [&::-webkit-slider-thumb]:h-[23px] [&::-webkit-slider-thumb]:w-[13px] [&::-webkit-slider-thumb]:appearance-none [&::-webkit-slider-thumb]:bg-[#0078d7] [&::-webkit-slider-thumb]:[clip-path:polygon(0_0,100%_0,100%_70%,50%_100%,0_70%)]"
        />
        <button aria-label="Zoom in" className="flex h-5 w-5 items-center justify-center rounded-full border border-[#8c8c8c] bg-linear-to-b from-white to-[#dcdcdc]">
          <svg viewBox="0 0 10 10" className="h-2.5 w-2.5" stroke="#555" strokeWidth="2" aria-hidden="true"><path d="M5 0v10M0 5h10" /></svg>
        </button>
      </div>
    </footer>
  );
}

/* ---------- app ---------- */

export default function App() {
  return (
    <div className="flex h-screen flex-col overflow-hidden bg-white font-['Noto_Sans','Open_Sans',sans-serif]">
      <TitleBar />
      <TabBar />
      <Ribbon />
      <main className="relative flex min-h-0 flex-1">
        <div className="flex min-w-0 flex-1 bg-linear-to-b from-[#c8d2e6] via-[#dbe4f1] to-[#dbe4f1] pl-[5px]">
          <div className="flex min-w-0 flex-1 flex-col">
            <div className="relative flex min-h-0 flex-1 flex-col bg-white">
              <ReportPage />
              <DownloadShelf />
              <Taskbar time="01:20 PM" nested />
              <Watermark className="right-[58px] bottom-[97px]" />
            </div>
            <div className="ml-[9px] h-1.5 shrink-0 bg-linear-to-b from-[#a9b5ce] to-[#cfdaea]" />
          </div>
        </div>
        <VerticalScrollBar />
        <span className="absolute bottom-px left-[963px] h-[5px] w-[5px] border border-[#444] bg-white" />
        <Watermark className="right-[84px] -bottom-1.5" />
      </main>
      <HorizontalScrollBar />
      <StatusBar />
      <Taskbar time="01:21 PM" />
    </div>
  );
}
